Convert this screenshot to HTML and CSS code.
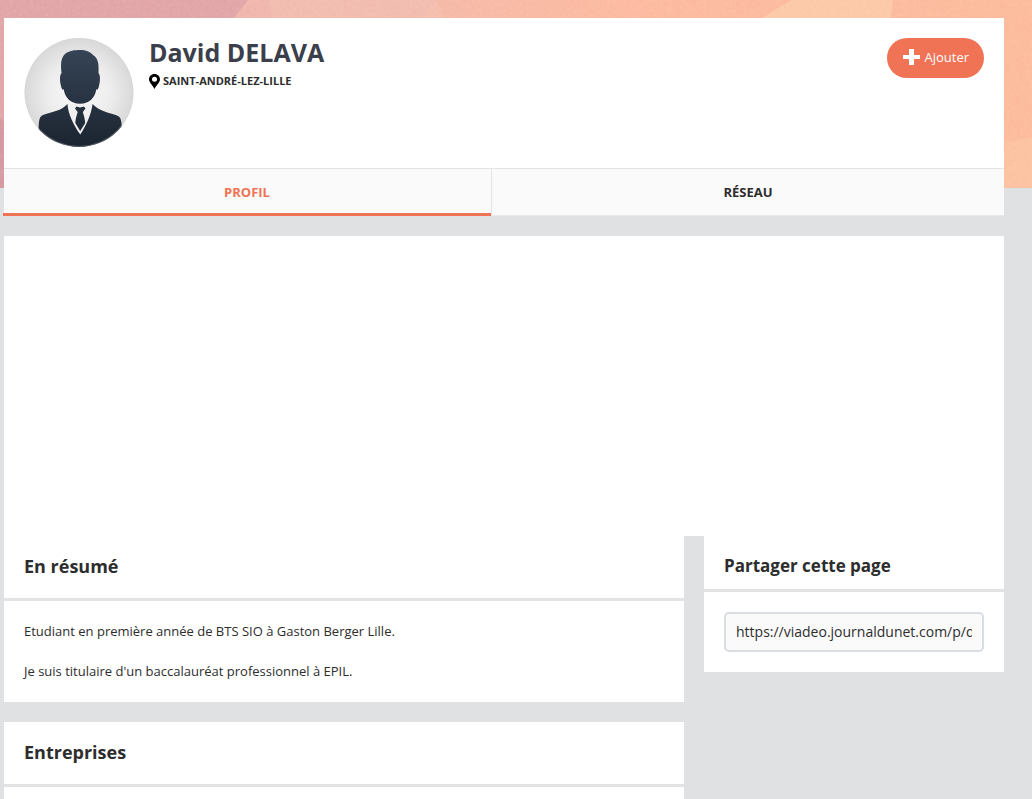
FILE: index.html
```html
<!DOCTYPE html>
<html lang="fr">
<head>
  <meta charset="UTF-8" />
  <title>David DELAVA</title>
  <link rel="stylesheet" href="styles.css">
</head>
<body>
  <!-- Decorative banner behind the profile card -->
  <svg class="banner" viewBox="0 0 1032 188" preserveAspectRatio="none" aria-hidden="true">
    <defs>
      <linearGradient id="bannerFill" x1="0" x2="1" y1="0" y2="0">
        <stop offset="0" stop-color="#e3a5a7" />
        <stop offset="0.24" stop-color="#dfa2a5" />
        <stop offset="0.27" stop-color="#f1b8ae" />
        <stop offset="0.6" stop-color="#fcb9a0" />
        <stop offset="1" stop-color="#fcba9b" />
      </linearGradient>
      <filter id="grain" x="0" y="0" width="100%" height="100%">
        <feTurbulence type="fractalNoise" baseFrequency="0.3" numOctaves="2" seed="4" />
        <feColorMatrix values="0 0 0 0 1  0 0 0 0 0.9  0 0 0 0 0.7  0.2 0 0 0 -0.06" />
      </filter>
    </defs>
    <rect width="1032" height="188" fill="url(#bannerFill)" />
    <polygon points="0,0 248,0 100,188 0,188" fill="#e1a4a7" />
    <polygon points="0,118 60,188 0,188" fill="#d5979f" />
    <polygon points="248,0 270,0 290,188 100,188" fill="#efb5ad" />
    <polygon points="270,0 436,0 300,188 290,188" fill="#f2bbb0" />
    <polygon points="436,0 520,188 300,188" fill="#f5bdae" />
    <polygon points="791,0 893,0 870,188 490,188" fill="#fcc8a7" />
    <polygon points="980,146 1032,137 1032,188 980,188" fill="#fcc1a0" />
    <rect width="1032" height="188" filter="url(#grain)" />
  </svg>

  <div class="page">
    <header class="profile">
      <div class="profile-top">
        <svg class="avatar" viewBox="0 0 110 110" role="img" aria-label="Photo de profil">
          <defs>
            <radialGradient id="avatarBg" cx="50%" cy="50%" r="50%">
              <stop offset="0" stop-color="#fbfbfb" />
              <stop offset="0.6" stop-color="#ececec" />
              <stop offset="1" stop-color="#d8d8d8" />
            </radialGradient>
            <linearGradient id="avatarInk" gradientUnits="userSpaceOnUse" x1="0" y1="12" x2="0" y2="110">
              <stop offset="0" stop-color="#364456" />
              <stop offset="1" stop-color="#1b2430" />
            </linearGradient>
            <clipPath id="avatarClip"><circle cx="55" cy="54.5" r="54.5" /></clipPath>
          </defs>
          <g clip-path="url(#avatarClip)">
            <rect width="110" height="110" fill="url(#avatarBg)" />
            <path d="M43 66 L55 98 L68 66Z" fill="#f0f0f0" />
            <g fill="url(#avatarInk)">
              <path d="M37.5 35 C36.5 25 37 20 41 16 C45 12.500 51 12 56 12 C62 12 66 13.500 69 17 C74 20 75 25 74.500 35 C76.500 37 76.300 43 75 48 C74.300 51 73.500 52 72.300 51.500 C71 59 66 65.800 56 65.800 C46 65.800 41 59 39.700 51.500 C38.500 52 37.700 51 37 48 C35.700 43 35.500 37 37.500 35Z" />
              <path d="M43.500 66 C44 76 50 88 56.300 96.500 C62 88 67.500 76 68.500 66 C75 73 83 74 93 77.500 C97 79 97.500 82 98 92 V110 H14.500 V92 C15 82 15 79 19 77 C29 73.500 37 73 43.500 66Z" />
              <path d="M52.500 68.500 L56 69.500 L60 68.500 L61.500 70.500 L58.800 74 C60 78 61 81 61.200 85 L56.200 93 L51.300 85 C51.500 81 52.500 78 53.700 74 L51 70.500Z" />
            </g>
          </g>
          <circle cx="55" cy="54.5" r="54" fill="none" stroke="#d5d5d5" stroke-opacity="0.3" />
        </svg>
        <div class="identity">
          <h1>David DELAVA</h1>
          <p class="location">
            <svg class="pin" viewBox="0 0 11 15" aria-hidden="true">
              <path fill-rule="evenodd" d="M5.500 0 C8.700 0 11 2.300 11 5.300 C11 8.600 7.500 11 5.500 15 C3.500 11 0 8.600 0 5.300 C0 2.300 2.300 0 5.500 0Z M5.500 2.800 A2.500 2.500 0 1 0 5.500 7.800 A2.500 2.500 0 1 0 5.500 2.800Z" />
            </svg>
            SAINT-ANDRÉ-LEZ-LILLE
          </p>
        </div>
        <button class="add-btn" type="button">
          <svg class="plus" viewBox="0 0 17 16" aria-hidden="true">
            <path d="M6 0H11V6H17V10H11V16H6V10H0V6H6Z" />
          </svg>
          Ajouter
        </button>
      </div>
      <nav class="tabs">
        <a class="tab active" href="#profil">PROFIL</a>
        <a class="tab" href="#reseau">RÉSEAU</a>
      </nav>
    </header>

    <!-- Empty ad slot -->
    <div class="ad-slot"></div>

    <div class="columns">
      <main class="main-col" id="profil">
        <section class="card">
          <h2>En résumé</h2>
          <div class="card-body">
            <p>Etudiant en première année de BTS SIO à Gaston Berger Lille.</p>
            <p>Je suis titulaire d'un baccalauréat professionnel à EPIL.</p>
          </div>
        </section>
        <section class="card">
          <h2>Entreprises</h2>
          <div class="card-body"></div>
        </section>
      </main>

      <aside class="card share">
        <h2><label for="shareUrl">Partager cette page</label></h2>
        <div class="share-body">
          <input id="shareUrl" type="text" readonly value="https://viadeo.journaldunet.com/p/david-delava">
        </div>
      </aside>
    </div>
  </div>
</body>
</html>
```
FILE: styles.css
```css
* {
  box-sizing: border-box;
}
html {
  overflow: hidden;
}
body {
  margin: 0;
  background-color: #e0e1e3;
  color: #2d2d2d;
  font-family: "Open Sans", "Noto Sans", sans-serif;
  font-size: 13px;
  line-height: 20px;
}
h1, h2, p {
  margin: 0;
}

/* Banner */
.banner {
  position: absolute;
  top: 0;
  left: 0;
  z-index: -1;
  width: 100%;
  height: 188px;
}
.page {
  margin: 18px 28px 0 4px;
}

/* Profile card */
.profile {
  background-color: #fff;
}
.profile-top {
  display: flex;
  align-items: flex-start;
  padding: 20px;
}
.avatar {
  width: 110px;
  height: 110px;
  margin-right: 15px;
}
.identity {
  flex: 1;
}
h1 {
  color: #3a3f4b;
  font-size: 25px;
  font-weight: 700;
  line-height: 28px;
}
.location {
  display: flex;
  align-items: center;
  gap: 3px;
  margin-top: 5px;
  font-size: 11px;
  font-weight: 700;
}
.pin {
  width: 11px;
  height: 15px;
  fill: #000;
}
.add-btn {
  display: flex;
  align-items: center;
  gap: 4px;
  height: 40px;
  padding: 0 15px 3px 16px;
  border: 0;
  border-radius: 20px;
  background-color: #f07355;
  color: #fff;
  font-family: inherit;
  font-size: 13px;
  cursor: pointer;
}
.plus {
  width: 17px;
  height: 16px;
  fill: #fff;
}

/* Tabs */
.tabs {
  display: grid;
  grid-template-columns: 488fr 512fr;
  border-top: 1px solid #e4e5e7;
  background-color: #fafafa;
}
.tab {
  padding: 13px 0;
  border-bottom: 1px solid #e8e9eb;
  color: #2d2d2d;
  font-size: 13px;
  font-weight: 700;
  text-align: center;
  text-decoration: none;
}
.tab.active {
  margin-left: -1px;
  border-right: 1px solid #e4e5e7;
  border-bottom: 0;
  box-shadow: inset 0 -3px #f07355;
  color: #f07355;
}

.ad-slot {
  height: 300px;
  margin-top: 20px;
  background-color: #fff;
}

/* Content columns */
.columns {
  display: grid;
  grid-template-columns: 1fr 300px;
  align-items: start;
  gap: 20px;
}
.main-col {
  display: grid;
  gap: 20px;
}
.card {
  background-color: #fff;
}
.card h2 {
  padding: 19px 20px 21px;
  border-bottom: 3px solid #e3e3e4;
  font-size: 18px;
  font-weight: 700;
  line-height: 22px;
}
.card-body {
  display: grid;
  gap: 20px;
  padding: 20px 20px 21px;
}
.share h2 {
  padding: 20px 20px 13px;
  font-size: 17px;
  line-height: 20px;
}
.share-body {
  padding: 20px;
}
.share input {
  display: block;
  width: 100%;
  height: 40px;
  padding: 0 10px 2px;
  border: 2px solid #d9dce0;
  border-radius: 5px;
  background-color: #fafafa;
  color: #2d2d2d;
  font-family: inherit;
  font-size: 14px;
}
```
